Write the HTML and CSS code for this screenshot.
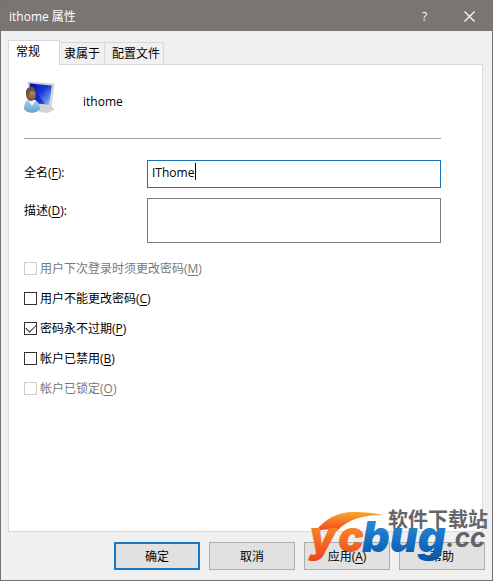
FILE: index.html
```html
<!DOCTYPE html>
<html lang="zh-CN">
<head>
<meta charset="utf-8">
<meta name="viewport" content="width=device-width, initial-scale=1">
<title>ithome 属性</title>
<link rel="stylesheet" href="styles.css">
</head>
<body>
<main class="window">
  <header class="titlebar">
    <h1 class="title">ithome 属性</h1>
    <button class="caption-button" type="button">?</button>
    <button class="caption-button" type="button" aria-label="关闭">
      <svg width="11" height="11" viewBox="0 0 11 11"><path d="M.5.5l10 10M10.500.5l-10 10" fill="none" stroke="#fff" stroke-width="1.200"/></svg>
    </button>
  </header>

  <form class="dialog">
    <div class="tabs" role="tablist">
      <button class="tab tab-active" type="button" role="tab" aria-selected="true">常规</button>
      <button class="tab" type="button" role="tab" aria-selected="false">隶属于</button>
      <button class="tab tab-wide" type="button" role="tab" aria-selected="false">配置文件</button>
    </div>

    <section class="panel">
      <div class="identity">
        <svg class="user-icon" width="32" height="34" viewBox="0 0 32 34">
          <defs>
            <linearGradient id="screen" x1="0" y1="0" x2="1" y2="1">
              <stop offset="0" stop-color="#0719a8"/><stop offset=".45" stop-color="#1635d8"/><stop offset="1" stop-color="#9cc8f8"/>
            </linearGradient>
            <linearGradient id="shirt" x1="0" y1="0" x2="0" y2="1">
              <stop offset="0" stop-color="#b3d8ee"/><stop offset="1" stop-color="#609fcb"/>
            </linearGradient>
            <radialGradient id="face" cx=".6" cy=".4" r=".6">
              <stop offset="0" stop-color="#b58a67"/><stop offset="1" stop-color="#705039"/>
            </radialGradient>
          </defs>
          <path d="M14 26l8-3 9 5-7 4-9-1z" fill="#d4d4d0"/>
          <path d="M4 1l26 2-3 24-20-3z" fill="#d5dbe0" stroke="#b4bac0" stroke-width=".5"/>
          <path d="M5.500 2.500l22.500 2-3 19.500-17-2z" fill="url(#screen)"/>
          <path d="M6 2.500l6 .5 1 9 8 11-12-1z" fill="#0614a0" opacity=".6"/>
          <path d="M0 28c0-7 3-10 7-10s9 3 9 10c-3 5-13 5-16 0z" fill="url(#shirt)"/>
          <path d="M4 19l4 6 4-6z" fill="#edf6fb"/>
          <ellipse cx="7" cy="13" rx="5" ry="7" fill="url(#face)"/>
          <path d="M2 13c-1-9 10-9 10-1-3-4-7-2-8 2z" fill="#66513f"/>
        </svg>
        <span>ithome</span>
      </div>
      <hr class="rule">

      <div class="fields">
        <label for="fullname">全名(<u>F</u>):</label>
        <div class="entry">
          <input class="field field-focus" id="fullname" type="text" value="IThome">
          <span class="caret"></span>
        </div>
        <label for="description">描述(<u>D</u>):</label>
        <textarea class="field field-tall" id="description"></textarea>
      </div>

      <div class="options">
        <label class="option option-disabled"><input type="checkbox" disabled><span>用户下次登录时须更改密码(<u>M</u>)</span></label>
        <label class="option"><input type="checkbox"><span>用户不能更改密码(<u>C</u>)</span></label>
        <label class="option"><input type="checkbox" checked><span>密码永不过期(<u>P</u>)</span></label>
        <label class="option"><input type="checkbox"><span>帐户已禁用(<u>B</u>)</span></label>
        <label class="option option-disabled"><input type="checkbox" disabled><span>帐户已锁定(<u>O</u>)</span></label>
      </div>
    </section>

    <footer class="actions">
      <button class="action action-default" type="button">确定</button>
      <button class="action" type="button">取消</button>
      <button class="action" type="button">应用(<u>A</u>)</button>
      <button class="action" type="button">帮助</button>
    </footer>
  </form>

  <svg class="watermark" width="190" height="68" viewBox="0 0 190 68" role="img" aria-label="ucbug.cc 软件下载站">
    <defs>
      <linearGradient id="orange" x1="0" y1="0" x2="0" y2="1"><stop offset="0" stop-color="#fca52c"/><stop offset="1" stop-color="#ed431c"/></linearGradient>
      <linearGradient id="blue" x1="0" y1="0" x2="0" y2="1"><stop offset="0" stop-color="#2d9be0"/><stop offset="1" stop-color="#0752ac"/></linearGradient>
    </defs>
    <path d="M14 30C24 16 38 10 52 10C64 10 74 11 81 13C62 13 47 17 36 29C29 27 22 27 14 30z" fill="url(#orange)"/>
    <text class="mark-main" x="8" y="50" fill="url(#orange)">y</text>
    <text class="mark-main" x="37" y="50" fill="url(#orange)">c</text>
    <text class="mark-main" x="61" y="50" fill="url(#blue)">bug</text>
    <text class="mark-suffix" x="145" y="45">.cc</text>
    <text class="mark-caption" x="87" y="25">软件下载站</text>
  </svg>
</main>
</body>
</html>
```

FILE: styles.css
```css
* { box-sizing: border-box; }
body { margin: 0; }
.window, button, input, textarea {
  font-family: "Open Sans", "Noto Sans CJK SC", sans-serif;
  font-size: 12px;
  color: #000;
}
.window {
  position: relative;
  display: flex;
  flex-direction: column;
  min-height: 100vh;
  border: 1px solid #777271;
  background: #f0f0f0;
}
.titlebar {
  display: flex;
  align-items: center;
  height: 30px;
  padding-left: 8px;
  background: #7a7472;
}
.title {
  flex: 1;
  margin: 0;
  font-size: 12px;
  font-weight: 400;
  color: #fff;
}
.caption-button {
  display: flex;
  align-items: center;
  justify-content: center;
  width: 45px;
  height: 30px;
  padding: 0;
  border: 0;
  background: none;
  color: #fff;
}
.dialog {
  flex: 1;
  display: flex;
  flex-direction: column;
  padding: 9px 9px 10px 7px;
}
.tabs { display: flex; align-items: flex-end; }
.tab {
  height: 22px;
  padding: 0 4px;
  border: 1px solid #d9d9d9;
  border-width: 1px 1px 0 0;
  background: #f0f0f0;
  line-height: 20px;
}
.tab-wide { padding: 0 3px 0 7px; }
.tab-active {
  z-index: 1;
  width: 52px;
  height: 25px;
  margin-bottom: -1px;
  padding: 0 19px 3px 7px;
  border-left-width: 1px;
  background: #fff;
}
.panel {
  flex: 1;
  padding: 16px 41px 16px 15px;
  border: 1px solid #d9d9d9;
  background: #fff;
}
.identity { display: flex; align-items: center; gap: 27px; height: 40px; }
.user-icon { margin-bottom: 6px; }
.rule { margin: 17px 0 21px; border: 0; border-top: 1px solid #a0a0a0; }
.fields {
  display: grid;
  grid-template-columns: 123px 1fr;
  gap: 10px 0;
  line-height: 26px;
}
.entry { position: relative; display: flex; }
.caret {
  position: absolute;
  left: 48px;
  top: 3px;
  width: 1px;
  height: 17px;
  background: #000;
}
.field {
  width: 100%;
  height: 28px;
  margin: 0;
  padding: 0 4px 4px;
  border: 1px solid #7a7a7a;
  border-radius: 0;
  outline: 0;
  background: #fff;
  resize: none;
}
.field-focus { border-color: #1874b9; }
.field-tall { height: 45px; }
.options { display: flex; flex-direction: column; gap: 10px; margin-top: 15px; }
.option { display: flex; align-items: center; gap: 3px; height: 20px; }
.option input {
  appearance: none;
  width: 13px;
  height: 13px;
  margin: 0;
  border: 1px solid #333;
  background: #fff;
}
.option input:checked::before {
  content: "";
  display: block;
  width: 9px;
  height: 5px;
  margin: 2px 1px;
  border: solid #333;
  border-width: 0 0 1px 1px;
  transform: translateY(-1px) rotate(-45deg);
}
.option-disabled { color: #777; }
.option-disabled input { border-color: #ccc; }
u { text-underline-offset: 2px; }
.actions { display: flex; justify-content: flex-end; gap: 9px; padding-top: 10px; margin-right: -2px; }
.action {
  width: 86px;
  height: 28px;
  padding: 0;
  border: 1px solid #adadad;
  background: #e1e1e1;
}
.action-default { border: 2px solid #1777c4; }
.watermark { position: absolute; right: 1px; bottom: 10px; pointer-events: none; }
.mark-main, .mark-suffix { font-family: Inter, "Liberation Sans", sans-serif; font-style: italic; }
.mark-main { font-size: 43px; font-weight: 900; }
.mark-suffix { font-size: 26px; font-weight: 700; fill: #606468; }
.mark-caption { font-family: "Noto Sans CJK SC", sans-serif; font-size: 20px; font-weight: 700; fill: #656669; }
```
